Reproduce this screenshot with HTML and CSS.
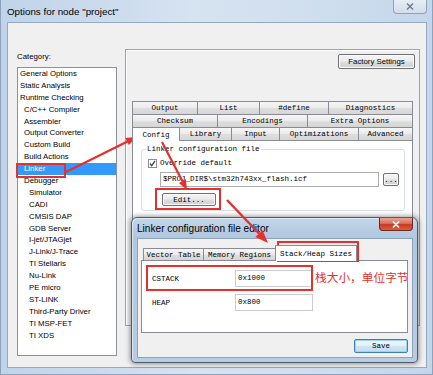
FILE: index.html
```html
<!DOCTYPE html>
<html>
<head>
<meta charset="utf-8">
<link rel="stylesheet" href="styles.css">
</head>
<body>
<div class="win">
  <div class="titlebar">
    <span class="title">Options for node "project"</span>
    <div class="wclose"><svg width="8" height="7" viewBox="0 0 8 7"><path d="M1 0.5 L7 6.5 M7 0.5 L1 6.5" stroke="#6a7d93" stroke-width="1.4"/></svg></div>
  </div>
  <div class="client">
    <div class="leftcol">
      <div class="catlabel">Category:</div>
      <ul class="catlist">
        <li class="l0">General Options</li>
        <li class="l0">Static Analysis</li>
        <li class="l0">Runtime Checking</li>
        <li class="l1">C/C++ Compiler</li>
        <li class="l1">Assembler</li>
        <li class="l1">Output Converter</li>
        <li class="l1">Custom Build</li>
        <li class="l1">Build Actions</li>
        <li class="l1 sel">Linker</li>
        <li class="l1">Debugger</li>
        <li class="l2">Simulator</li>
        <li class="l2">CADI</li>
        <li class="l2">CMSIS DAP</li>
        <li class="l2">GDB Server</li>
        <li class="l2">I-jet/JTAGjet</li>
        <li class="l2">J-Link/J-Trace</li>
        <li class="l2">TI Stellaris</li>
        <li class="l2">Nu-Link</li>
        <li class="l2">PE micro</li>
        <li class="l2">ST-LINK</li>
        <li class="l2">Third-Party Driver</li>
        <li class="l2">TI MSP-FET</li>
        <li class="l2">TI XDS</li>
      </ul>
    </div>
    <div class="rpanel">
      <div class="fsrow"><div class="btn fs">Factory Settings</div></div>
      <div class="tabs">
        <div class="tabrow">
          <div class="tab w-output">Output</div>
          <div class="tab w-list">List</div>
          <div class="tab w-define">#define</div>
          <div class="tab w-diag">Diagnostics</div>
        </div>
        <div class="tabrow">
          <div class="tab w-check">Checksum</div>
          <div class="tab w-enc">Encodings</div>
          <div class="tab w-extra">Extra Options</div>
        </div>
        <div class="tabrow">
          <div class="tab sel w-config">Config</div>
          <div class="tab w-lib">Library</div>
          <div class="tab w-input">Input</div>
          <div class="tab w-opt">Optimizations</div>
          <div class="tab w-adv">Advanced</div>
        </div>
        <div class="tabpanel">
          <div class="group">
            <div class="legend">Linker configuration file</div>
            <div class="chkrow">
              <svg class="chk" width="9" height="9" viewBox="0 0 9 9"><rect x="0.5" y="0.5" width="8" height="8" fill="#fff" stroke="#8e8f8f"/><path d="M2 4.5 L3.7 6.6 L7 2" fill="none" stroke="#2d4a7a" stroke-width="1.3"/></svg>
              <span class="chktext">Override default</span>
            </div>
            <div class="pathrow">
              <div class="pathinput">$PROJ_DIR$\stm32h743xx_flash.icf</div>
              <div class="btn dots">...</div>
            </div>
            <div class="btn editbtn">Edit...</div>
          </div>
        </div>
      </div>
    </div>
  </div>

  <div class="dlg">
    <div class="dlgtitle">
      <span class="dlgtext">Linker configuration file editor</span>
      <div class="dlgclose"><svg width="8" height="7" viewBox="0 0 8 7"><path d="M1 0.5 L7 6.5 M7 0.5 L1 6.5" stroke="#fff" stroke-width="1.6"/></svg></div>
    </div>
    <div class="dlgclient">
      <div class="dtabs">
        <div class="dtab w-vec">Vector Table</div>
        <div class="dtab w-mem">Memory Regions</div>
        <div class="dtab sel w-stack">Stack/Heap Sizes</div>
      </div>
      <div class="dpanel">
        <div class="drow"><span class="dlabel">CSTACK</span><div class="dinput">0x1000</div></div>
        <div class="drow"><span class="dlabel">HEAP</span><div class="dinput">0x800</div></div>
      </div>
      <div class="saverow"><div class="btn save">Save</div></div>
    </div>
  </div>

  <div class="note">栈大小，单位字节</div>

  <svg class="annot" width="433" height="375" viewBox="0 0 433 375">
    <g fill="none" stroke="#e5302b" stroke-width="2">
      <rect x="17" y="164" width="48" height="13"/>
      <rect x="134" y="128" width="45" height="12"/>
      <rect x="156" y="189" width="64" height="20"/>
      <rect x="278" y="242" width="80" height="19"/>
      <rect x="147" y="266" width="165" height="24"/>
      <line x1="66" y1="172" x2="128" y2="141.2" stroke-width="2.2"/>
      <line x1="162" y1="142" x2="182.6" y2="181.4" stroke-width="2.2"/>
      <line x1="227" y1="200" x2="259.5" y2="234" stroke-width="2.4"/>
    </g>
    <g fill="#e5302b">
      <polygon points="136,137 128.9,145.1 125.3,137.9"/>
      <polygon points="187,190 185.9,179.3 178.9,182.9"/>
      <polygon points="268,243 262.6,230.2 255.4,237"/>
    </g>
  </svg>
</div>
</body>
</html>
```

FILE: styles.css
```css
* { box-sizing: border-box; margin: 0; padding: 0; }
body { margin: 0; width: 433px; height: 375px; overflow: hidden; background: #fff; }

.win {
  position: relative;
  width: 433px; height: 375px;
  display: flex; flex-direction: column;
  padding: 0 6px 7px 7px;
  background: linear-gradient(90deg, #c0d3e9 0, #d6e3f1 45%, #cfdeee 75%, #c4d6ea 100%);
  box-shadow: inset 1px 0 0 #8ea3bb, inset -1px 0 0 #8ea3bb, inset 0 -1px 0 #8ea3bb;
  font-family: "Liberation Sans", Arial, sans-serif;
}

.titlebar { height: 22px; display: flex; align-items: center; }
.title { font-size: 9.8px; color: #000; padding-top: 1px; }
.wclose {
  margin-left: auto; align-self: flex-start;
  width: 34px; height: 14px;
  border: 1px solid #8ea2b9; border-top: none;
  border-radius: 0 0 4px 4px;
  background: linear-gradient(#e6edf5, #d2deeb);
  display: flex; align-items: center; justify-content: center;
}

.client {
  flex: 1;
  background: #f0f0f0;
  border: 1px solid #95a9c1;
  display: flex; align-items: flex-start;
}

.leftcol { margin-left: 9px; padding-top: 29px; }
.catlabel { font-size: 7.8px; line-height: 10px; height: 10px; color: #000; }
.catlist {
  list-style: none;
  margin-top: 5px;
  width: 100px; height: 289px;
  background: #fff;
  border: 1px solid #8c9099;
}
.catlist li {
  height: 11.9px; line-height: 11.9px;
  font-size: 7.8px; color: #000; white-space: nowrap;
}
.catlist .l0 { padding-left: 2px; }
.catlist .l1 { padding-left: 6px; }
.catlist .l2 { padding-left: 11px; }
.catlist .sel { background: #3399ff; color: #fff; }

.rpanel {
  margin-left: 8px; margin-top: 26px;
  width: 295px; height: 277px;
  border: 1px solid #a3a3a3;
  box-shadow: inset 1px 1px 0 #fff;
  display: flex; flex-direction: column;
}
.fsrow { display: flex; justify-content: flex-end; padding: 4px 4px 0 0; }

.btn {
  border: 1px solid #707070; border-radius: 2px;
  background: linear-gradient(#f4f4f4 0, #ececec 48%, #dedede 52%, #d0d0d0 100%);
  box-shadow: inset 0 0 0 1px #fbfbfb;
  display: flex; align-items: center; justify-content: center;
  color: #000;
}
.fs { width: 77px; height: 15px; font-size: 7.8px; }

.tabs { margin: 32px 0 0 6px; width: 281px; }
.tabrow { display: flex; height: 13px; }
.tab, .dtab {
  height: 13px;
  border: 1px solid #898c95; border-bottom: none; border-right: none;
  background: linear-gradient(#f6f6f6 0, #ebebeb 50%, #dfdfdf 51%, #d6d6d6 100%);
  display: flex; align-items: center; justify-content: center;
  font-family: "Liberation Mono", "Courier New", monospace; font-size: 7.5px; color: #000;
  white-space: nowrap;
}
.tabrow .tab:last-child { border-right: 1px solid #898c95; }
.tab.sel { background: #fff; height: 14px; margin-bottom: -1px; border-right: 1px solid #898c95; position: relative; z-index: 1; }
.tab.sel + .tab { border-left: none; }

.w-output { width: 65px; } .w-list { width: 62px; } .w-define { width: 69px; } .w-diag { width: 85px; }
.w-check { width: 85px; } .w-enc { width: 90px; } .w-extra { width: 106px; }
.w-config { width: 48px; } .w-lib { width: 51px; } .w-input { width: 48px; } .w-opt { width: 79px; } .w-adv { width: 55px; }

.tabpanel {
  width: 281px; height: 180px;
  background: #fff;
  border: 1px solid #898c95;
  padding: 8px 0 0 8px;
}
.legend, .chktext, .pathinput, .dots, .editbtn, .dlabel, .dinput, .save {
  font-family: "Liberation Mono", "Courier New", monospace; font-size: 7.5px; color: #000;
}
.group {
  width: 264px;
  border: 1px solid #d5dfe5; border-radius: 3px;
  padding-bottom: 4px;
}
.legend {
  display: block; width: max-content;
  margin: -6px 0 0 4px; padding: 0 1px;
  background: #fff; line-height: 11px; height: 11px;
}
.chkrow { display: flex; align-items: center; margin: 4px 0 0 6px; height: 9px; }
.chktext { margin-left: 3px; line-height: 9px; }
.pathrow { display: flex; align-items: center; margin: 4px 0 0 18px; height: 15px; }
.pathinput {
  width: 219px; height: 15px;
  border: 1px solid #abadb3; background: #fff;
  padding-left: 2px; line-height: 13px; white-space: nowrap;
}
.dots { width: 16px; height: 13px; margin-left: 4px; }
.editbtn { margin: 6px 0 0 20px; width: 54px; height: 13px; }

.dlg {
  position: absolute; left: 131px; top: 217px;
  width: 287px; height: 146px;
  border: 1px solid #4a5b6f; border-radius: 6px 6px 4px 4px;
  background: linear-gradient(180deg, #c2d5ea 0, #b0c7e0 20px, #b8cce2 100%);
  padding: 0 4px 4px 5px;
  display: flex; flex-direction: column;
  box-shadow: 0 0 5px 1px rgba(0,0,0,.4), inset 1px 1px 0 rgba(255,255,255,.5);
}
.dlgtitle { height: 20px; display: flex; align-items: flex-start; }
.dlgtext { font-size: 10.1px; color: #000; padding-top: 5px; }
.dlgclose {
  margin-left: auto;
  width: 34px; height: 13px;
  border: 1px solid #6a2a1f; border-top: none;
  border-radius: 0 0 4px 4px;
  background: linear-gradient(#eaa595 0, #d8705e 45%, #c73a22 55%, #d8603d 100%);
  display: flex; align-items: center; justify-content: center;
}
.dlgclient {
  flex: 1;
  background: #f0f0f0;
  border: 1px solid #8da2bb;
  padding: 6px 0 0 3px;
  display: flex; flex-direction: column;
}
.dtabs { display: flex; align-items: flex-end; height: 15px; padding-left: 2px; }
.dtab { height: 12px; }
.dtab.sel { height: 16px; margin-bottom: -1px; background: #fff; border-right: 1px solid #898c95; position: relative; z-index: 1; }
.w-vec { width: 60px; } .w-mem { width: 72px; } .w-stack { width: 82px; }
.dpanel {
  width: 267px; height: 73px;
  background: #fff;
  border: 1px solid #898c95;
  padding: 9px 0 0 10px;
}
.drow { display: flex; align-items: center; height: 17px; }
.drow + .drow { margin-top: 7px; }
.dlabel { width: 83px; }
.dinput {
  width: 78px; height: 17px;
  border: 1px solid #c9ccd2; background: #fff;
  padding-left: 2px; line-height: 15px;
}
.saverow { display: flex; justify-content: flex-end; margin-top: 6px; padding-right: 4px; }
.save {
  width: 54px; height: 14px;
  border: 1px solid #3c7fb1;
  background: linear-gradient(#f0f7fc 0, #e3f0f9 48%, #cfe5f4 52%, #c2ddef 100%);
  box-shadow: inset 0 0 0 1px #9fd3f3;
}

.note {
  position: absolute; left: 315px; top: 270px;
  font-family: "Noto Sans CJK SC", sans-serif; font-size: 11.7px; line-height: 14px;
  color: #e5302b; white-space: nowrap;
}
.annot { position: absolute; left: 0; top: 0; pointer-events: none; }
```
